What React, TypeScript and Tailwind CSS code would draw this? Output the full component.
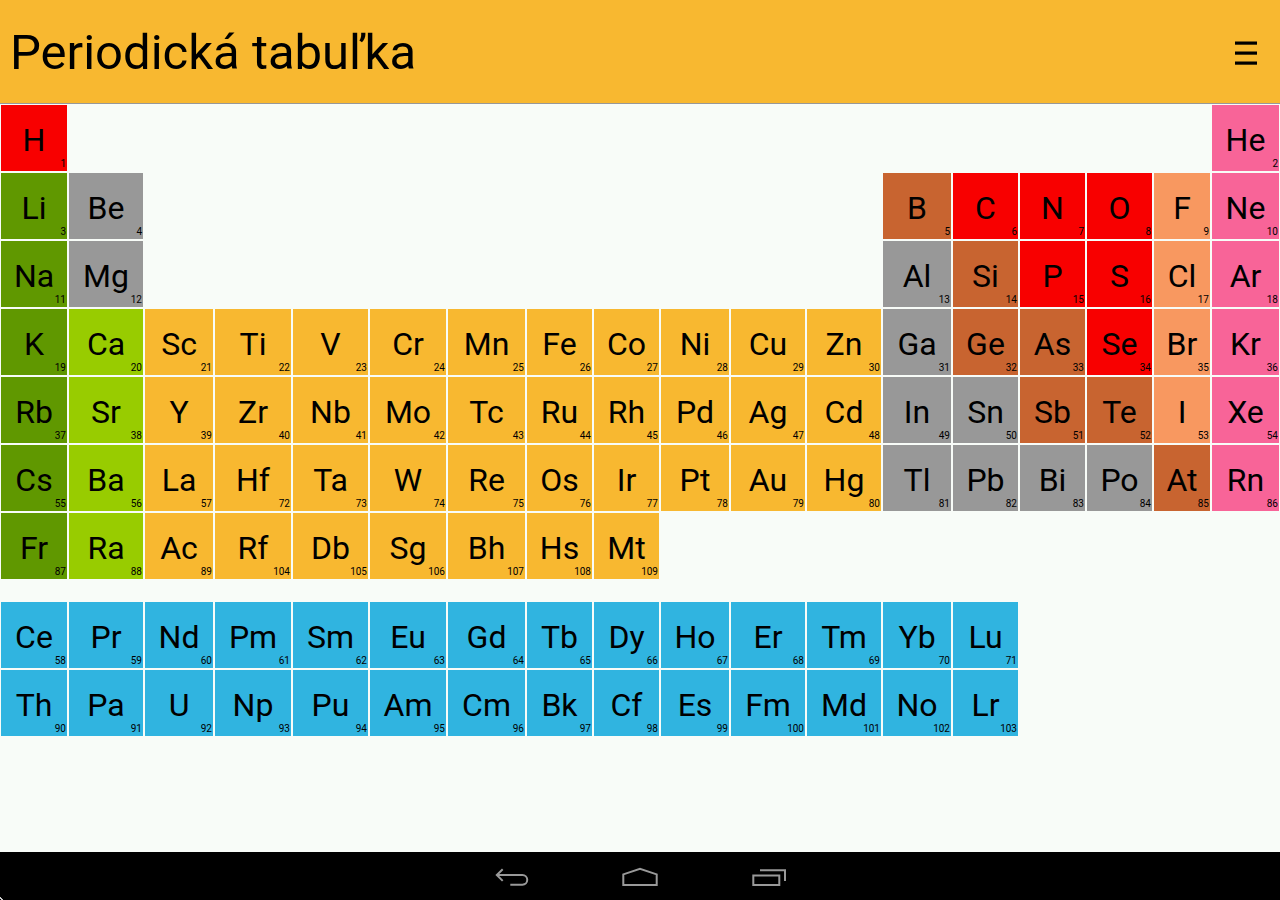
import React from "react";

type Tone = { [key: string]: string };

const tones: Tone = {
  r: "bg-[#f80000]",
  g: "bg-[#609800]",
  y: "bg-[#989898]",
  l: "bg-[#98cc00]",
  a: "bg-[#f8b830]",
  b: "bg-[#c86430]",
  o: "bg-[#f89860]",
  p: "bg-[#f86498]",
  c: "bg-[#30b4e0]",
};

const columns = [
  "w-[68px]", "w-[76px]", "w-[70px]", "w-[78px]", "w-[77px]", "w-[78px]",
  "w-[79px]", "w-[67px]", "w-[67px]", "w-[70px]", "w-[76px]", "w-[76px]",
  "w-[70px]", "w-[67px]", "w-[67px]", "w-[67px]", "w-[58px]", "w-[69px]",
];

// Each entry is symbol:number:tone; a bare number is a run of empty cells.
const mainRows = [
  "H:1:r 16 He:2:p",
  "Li:3:g Be:4:y 10 B:5:b C:6:r N:7:r O:8:r F:9:o Ne:10:p",
  "Na:11:g Mg:12:y 10 Al:13:y Si:14:b P:15:r S:16:r Cl:17:o Ar:18:p",
  "K:19:g Ca:20:l Sc:21:a Ti:22:a V:23:a Cr:24:a Mn:25:a Fe:26:a Co:27:a Ni:28:a Cu:29:a Zn:30:a Ga:31:y Ge:32:b As:33:b Se:34:r Br:35:o Kr:36:p",
  "Rb:37:g Sr:38:l Y:39:a Zr:40:a Nb:41:a Mo:42:a Tc:43:a Ru:44:a Rh:45:a Pd:46:a Ag:47:a Cd:48:a In:49:y Sn:50:y Sb:51:b Te:52:b I:53:o Xe:54:p",
  "Cs:55:g Ba:56:l La:57:a Hf:72:a Ta:73:a W:74:a Re:75:a Os:76:a Ir:77:a Pt:78:a Au:79:a Hg:80:a Tl:81:y Pb:82:y Bi:83:y Po:84:y At:85:b Rn:86:p",
  "Fr:87:g Ra:88:l Ac:89:a Rf:104:a Db:105:a Sg:106:a Bh:107:a Hs:108:a Mt:109:a 9",
];

const seriesRows = [
  "Ce:58:c Pr:59:c Nd:60:c Pm:61:c Sm:62:c Eu:63:c Gd:64:c Tb:65:c Dy:66:c Ho:67:c Er:68:c Tm:69:c Yb:70:c Lu:71:c 4",
  "Th:90:c Pa:91:c U:92:c Np:93:c Pu:94:c Am:95:c Cm:96:c Bk:97:c Cf:98:c Es:99:c Fm:100:c Md:101:c No:102:c Lr:103:c 4",
];

function ElementRow({ cells }: { cells: string }) {
  return (
    <tr>
      {cells.split(" ").map((cell, i) => {
        const [symbol, number, tone] = cell.split(":");
        if (!number) return <td key={i} colSpan={Number(symbol)} />;
        return (
          <td key={i} className="p-px">
            <button
              type="button"
              className={`relative flex h-[66px] w-full items-center justify-center pt-1 text-[32px] leading-[38px] text-black ${tones[tone]}`}
            >
              {symbol}
              <span className="absolute right-px bottom-px text-[10px] leading-3">{number}</span>
            </button>
          </td>
        );
      })}
    </tr>
  );
}

function NavButton({ label, children }: { label: string; children: React.ReactNode }) {
  return (
    <button type="button" aria-label={label} className="flex h-12 w-32 items-center justify-center">
      <svg width="40" height="24" viewBox="0 0 40 24" fill="none" stroke="#999999" strokeWidth="2">
        {children}
      </svg>
    </button>
  );
}

export default function App() {
  return (
    <div className="flex min-h-screen flex-col bg-[#f8fcf8] font-[Roboto,sans-serif] text-black">
      <header className="flex h-[104px] items-center justify-between border-b border-[#989898] bg-[#f8b830] pt-[3px] pr-[11px] pl-[10px]">
        <h1 className="text-[49px] leading-[56px]">Periodická tabuľka</h1>
        <button type="button" aria-label="Menu" className="flex h-12 w-12 items-center justify-end pr-3">
          <svg width="22" height="26" viewBox="0 0 22 26" fill="#000000">
            <rect y="1.5" width="22" height="3.2" />
            <rect y="11.5" width="22" height="3.2" />
            <rect y="21.5" width="22" height="3.2" />
          </svg>
        </button>
      </header>

      <main className="flex-1">
        <table className="w-full table-fixed border-collapse">
          <colgroup>
            {columns.map((width, i) => (
              <col key={i} className={width} />
            ))}
          </colgroup>
          <tbody>
            {mainRows.map((row) => (
              <ElementRow key={row} cells={row} />
            ))}
          </tbody>
          <tbody>
            <tr>
              <td colSpan={18} className="h-[21px]" />
            </tr>
            {seriesRows.map((row) => (
              <ElementRow key={row} cells={row} />
            ))}
          </tbody>
        </table>
      </main>

      <nav className="relative flex h-12 justify-center bg-black">
        <NavButton label="Späť">
          <path d="M10.7 5.2 4.8 11l5.9 5.9M4.8 11H30.4a4.8 4.8 0 0 1 0 9.7H18.3" />
        </NavButton>
        <NavButton label="Domov">
          <path d="M3.3 21V10.4L20 4.9l16.7 5.5V21Z" />
        </NavButton>
        <NavButton label="Nedávne aplikácie">
          <path d="M5.3 11.4H31.3V21H5.3ZM12 6.2H37V17" />
        </NavButton>
        <svg className="absolute bottom-0 left-0" width="3" height="3" viewBox="0 0 3 3" fill="#cccccc">
          <path d="M0 0h1v1h1v1h1v1H1V2H0Z" />
        </svg>
      </nav>
    </div>
  );
}
